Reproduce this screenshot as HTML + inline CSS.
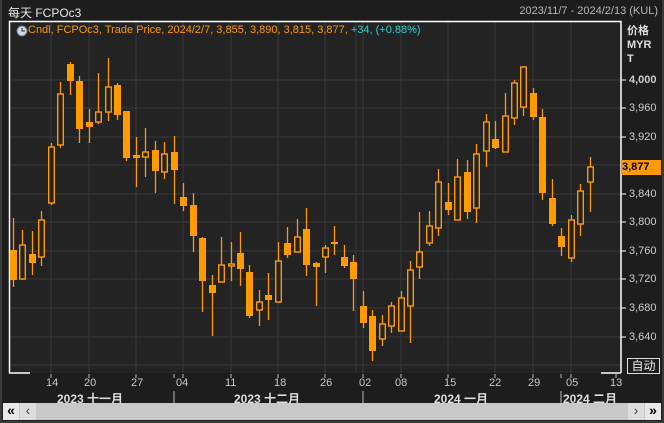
<!DOCTYPE html>
<html><head><meta charset="utf-8"><style>
*{margin:0;padding:0;box-sizing:border-box}
body{width:664px;height:423px;background:#1d1d1d;position:relative;overflow:hidden;font-family:"Liberation Sans","Noto Sans CJK SC",sans-serif;font-size:11px;color:#c8c8c8}
.a{position:absolute;white-space:nowrap}
</style></head><body>
<div class="a" style="left:0;top:0;width:664px;height:423px;border:2px solid #3a3a3a;border-top:0"></div>
<div class="a" style="left:8px;top:4px;color:#e8e8e8;font-size:12px">每天 FCPOc3</div>
<div class="a" style="right:6px;top:5px;color:#b8b8b8">2023/11/7 - 2024/2/13 (KUL)</div>
<svg class="a" style="left:0;top:0" width="664" height="423">
<rect x="10" y="22" width="611" height="351" fill="#232323"/>
<g stroke="#333" stroke-width="1.5">
<line x1="10" x2="621" y1="80" y2="80"/><line x1="10" x2="621" y1="108" y2="108"/><line x1="10" x2="621" y1="137" y2="137"/><line x1="10" x2="621" y1="165" y2="165"/><line x1="10" x2="621" y1="194" y2="194"/><line x1="10" x2="621" y1="222" y2="222"/><line x1="10" x2="621" y1="251" y2="251"/><line x1="10" x2="621" y1="279" y2="279"/><line x1="10" x2="621" y1="308" y2="308"/><line x1="10" x2="621" y1="337" y2="337"/><line x1="10" x2="621" y1="365" y2="365"/>
<line x1="51" x2="51" y1="22" y2="373"/><line x1="89" x2="89" y1="22" y2="373"/><line x1="136" x2="136" y1="22" y2="373"/><line x1="183" x2="183" y1="22" y2="373"/><line x1="231" x2="231" y1="22" y2="373"/><line x1="278" x2="278" y1="22" y2="373"/><line x1="325" x2="325" y1="22" y2="373"/><line x1="356" x2="356" y1="22" y2="373"/><line x1="363" x2="363" y1="22" y2="373"/><line x1="401" x2="401" y1="22" y2="373"/><line x1="448" x2="448" y1="22" y2="373"/><line x1="495" x2="495" y1="22" y2="373"/><line x1="533" x2="533" y1="22" y2="373"/><line x1="571" x2="571" y1="22" y2="373"/>
</g>
<g stroke="#fff" stroke-width="1.5" fill="none">
<path d="M30 373H9.5V21.5H621V373"/><line x1="601" x2="621" y1="373" y2="373"/>
</g>
<g stroke="#fff" stroke-width="1">
<line x1="621" x2="626" y1="80" y2="80"/><line x1="621" x2="626" y1="108" y2="108"/><line x1="621" x2="626" y1="137" y2="137"/><line x1="621" x2="626" y1="194" y2="194"/><line x1="621" x2="626" y1="222" y2="222"/><line x1="621" x2="626" y1="251" y2="251"/><line x1="621" x2="626" y1="279" y2="279"/><line x1="621" x2="626" y1="308" y2="308"/><line x1="621" x2="626" y1="337" y2="337"/>
</g>
<g stroke="#bbb" stroke-width="1">
<line x1="51" x2="51" y1="374" y2="378"/><line x1="89" x2="89" y1="374" y2="378"/><line x1="136" x2="136" y1="374" y2="378"/><line x1="174" x2="174" y1="374" y2="378"/><line x1="183" x2="183" y1="374" y2="378"/><line x1="231" x2="231" y1="374" y2="378"/><line x1="278" x2="278" y1="374" y2="378"/><line x1="325" x2="325" y1="374" y2="378"/><line x1="363" x2="363" y1="374" y2="378"/><line x1="401" x2="401" y1="374" y2="378"/><line x1="448" x2="448" y1="374" y2="378"/><line x1="495" x2="495" y1="374" y2="378"/><line x1="533" x2="533" y1="374" y2="378"/><line x1="561" x2="561" y1="374" y2="378"/><line x1="571" x2="571" y1="374" y2="378"/><line x1="616" x2="616" y1="374" y2="378"/>
<line x1="174" x2="174" y1="391" y2="404"/><line x1="363" x2="363" y1="391" y2="404"/><line x1="561" x2="561" y1="391" y2="404"/>
</g>
<g id="c" stroke="#ff9a00" fill="#ff9a00"></g>
<rect x="621" y="160" width="40" height="15" fill="#ff9a00"/>
<circle cx="22" cy="31" r="5" fill="#cfd8e8" stroke="#6a7890"/><path d="M22 28V31H25" stroke="#333" fill="none"/>
</svg>
<div class="a" style="left:28px;top:24px;color:#ff9a00;font-size:11px">Cndl, FCPOc3, Trade Price, 2024/2/7, 3,855, 3,890, 3,815, 3,877, <span style="color:#22d8d8">+34, (+0.88%)</span></div>
<div class="a" style="left:627px;top:24px;color:#ddd;font-weight:bold;font-size:11px;line-height:14px">价格<br>MYR<br>T</div>
<div class="a" style="left:629px;top:74px;color:#ccc;line-height:12px;font-size:11px">
<div style="position:absolute;top:0;font-weight:bold">4,000</div><div style="position:absolute;top:28px">3,960</div><div style="position:absolute;top:57px">3,920</div><div style="position:absolute;top:114px">3,840</div><div style="position:absolute;top:142px">3,800</div><div style="position:absolute;top:171px">3,760</div><div style="position:absolute;top:199px">3,720</div><div style="position:absolute;top:228px">3,680</div><div style="position:absolute;top:257px">3,640</div></div>
<div class="a" style="left:622px;top:161px;color:#000;font-weight:bold;font-size:11px">3,877</div>
<div class="a" style="left:627px;top:358px;width:33px;height:16px;border:1px solid #ddd;color:#eee;font-size:12px;text-align:center;line-height:14px">自动</div>
<div class="a" style="top:377px;left:0;width:664px;font-size:11px;color:#c8c8c8">
<span class="a" style="left:46px">14</span><span class="a" style="left:84px">20</span><span class="a" style="left:131px">27</span><span class="a" style="left:176px">04</span><span class="a" style="left:225px">11</span><span class="a" style="left:274px">18</span><span class="a" style="left:320px">26</span><span class="a" style="left:359px">02</span><span class="a" style="left:395px">08</span><span class="a" style="left:444px">15</span><span class="a" style="left:489px">22</span><span class="a" style="left:528px">29</span><span class="a" style="left:566px">05</span><span class="a" style="left:610px">13</span></div>
<div class="a" style="top:390px;left:0;width:664px;font-size:12px;color:#ddd;font-weight:bold">
<span class="a" style="left:57px">2023 十一月</span><span class="a" style="left:234px">2023 十二月</span><span class="a" style="left:434px">2024 一月</span><span class="a" style="left:563px">2024 二月</span></div>
<div class="a" style="left:3px;top:403px;width:658px;height:17px;background:#c8c8c8"></div>
<div class="a" style="left:3px;top:403px;width:16px;height:17px;background:#e8e8e8;color:#000;font-weight:bold;font-size:14px;line-height:15px;text-align:center">«</div>
<div class="a" style="left:20px;top:403px;width:16px;height:17px;background:#ddd;color:#444;font-size:14px;line-height:15px;text-align:center">‹</div>
<div class="a" style="left:628px;top:403px;width:16px;height:17px;background:#ddd;color:#444;font-size:14px;line-height:15px;text-align:center">›</div>
<div class="a" style="left:645px;top:403px;width:16px;height:17px;background:#e8e8e8;color:#000;font-weight:bold;font-size:14px;line-height:15px;text-align:center">»</div>
<script>
var d=[[13,218,287,250,280,1],[22,230,280,245,279,0],[32,231,275,254,263,1],[41,211,266,220,257,0],[51,143,205,147,203,0],[60,82,148,94,145,0],[70,62,95,64,81,1],[79,76,143,81,129,1],[89,109,143,122,127,1],[98,73,124,112,122,0],[108,58,121,87,112,0],[117,83,120,85,115,1],[126,111,161,111,158,1],[136,137,187,155,158,1],[145,128,177,152,157,0],[155,141,193,150,171,1],[164,142,179,154,172,0],[174,136,204,152,170,1],[183,183,211,197,206,1],[193,193,252,205,236,1],[202,237,312,238,281,1],[212,275,336,285,293,1],[221,237,282,265,282,0],[231,242,281,264,266,0],[240,232,286,253,269,1],[249,265,318,272,316,1],[259,290,326,302,310,0],[268,273,320,295,300,1],[278,242,303,261,302,0],[287,227,258,243,255,1],[297,219,252,237,252,0],[306,208,276,229,265,1],[316,262,306,263,267,1],[325,245,273,248,257,0],[334,226,255,242,244,1],[344,245,268,257,266,1],[353,255,311,262,279,1],[363,291,328,306,323,1],[372,310,361,316,351,1],[382,315,346,324,339,0],[391,302,333,306,326,0],[401,291,331,298,331,0],[410,261,343,270,306,0],[419,212,279,252,267,0],[429,211,246,226,243,0],[438,169,236,182,228,0],[448,183,215,202,210,1],[457,159,220,177,220,0],[467,160,219,172,212,1],[476,144,223,154,208,0],[486,114,167,122,151,0],[495,121,149,139,148,1],[505,93,152,116,152,0],[514,80,125,83,118,0],[523,66,116,67,107,0],[533,88,120,93,117,1],[542,109,200,117,193,1],[552,179,226,198,224,1],[561,228,256,236,247,1],[571,215,262,220,258,0],[580,184,236,191,224,0],[590,157,212,167,182,0]];
var s='';d.forEach(function(c){s+='<line x1="'+(c[0]+.5)+'" x2="'+(c[0]+.5)+'" y1="'+c[1]+'" y2="'+c[2]+'" stroke-width="1.3"/>';
if(c[5])s+='<rect x="'+(c[0]-3)+'" y="'+c[3]+'" width="7" height="'+Math.max(2,c[4]-c[3])+'" stroke="none"/>';
else s+='<rect x="'+(c[0]-2.3)+'" y="'+c[3]+'" width="5.6" height="'+Math.max(2,c[4]-c[3])+'" fill="#232323" stroke-width="1.4"/>';});
document.getElementById('c').innerHTML=s;
</script>
</body></html>
